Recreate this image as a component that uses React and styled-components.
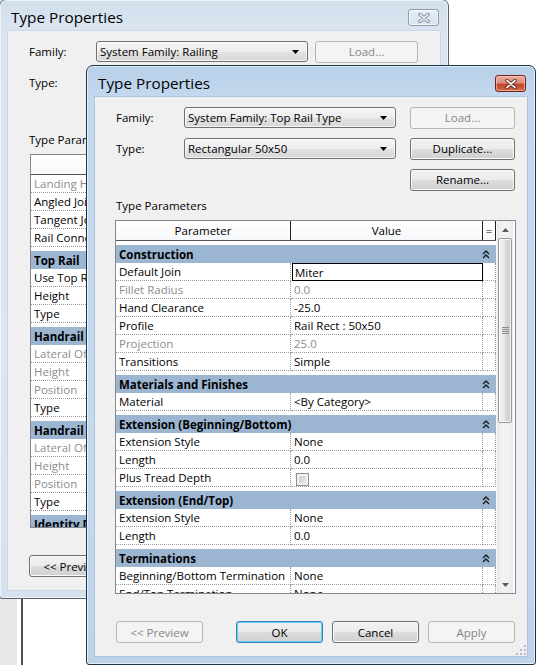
import React from 'react';
import styled, { createGlobalStyle, css } from 'styled-components';

const FONT = `"Open Sans", "Noto Sans", "DejaVu Sans", sans-serif`;

const Global = createGlobalStyle`
  html, body { margin: 0; padding: 0; background: #fff; }
  body { font-family: ${FONT}; font-size: 11.5px; color: #000; }
  *, *::before, *::after { box-sizing: border-box; }
`;

const Desktop = styled.div`
  position: relative;
  width: 536px;
  height: 665px;
  overflow: hidden;
  background: #fff;
  display: flex;
  gap: 4px;
`;
const DesktopStrip = styled.div`
  width: 17px;
  background: #e8e8e8;
`;
const DesktopRule = styled.div`
  width: 2px;
  background: #505050;
`;

const Window = styled.section`
  position: absolute;
  left: ${p => p.$x}px;
  top: ${p => p.$y}px;
  width: 450px;
  height: 600px;
  display: flex;
  flex-direction: column;
  padding: 0 7px 7px;
  border: 1px solid ${p => (p.$active ? '#1f3446' : '#55626f')};
  border-radius: 7px 7px 3px 3px;
  background: ${p =>
    p.$active
      ? 'linear-gradient(180deg, #b7cfe8 0px, #c3d8ee 28px, #c6daef 60%, #bdd3ea 100%)'
      : 'linear-gradient(180deg, #d2dfec 0px, #d9e4f0 28px, #dbe6f2 60%, #d6e2ee 100%)'};
  box-shadow: inset 0 0 0 1px rgba(255, 255, 255, 0.6);
`;

const TitleBar = styled.header`
  height: 30px;
  flex: none;
  display: flex;
  align-items: flex-start;
  padding: 9px 2px 0 4px;
`;
const Title = styled.h1`
  flex: 1;
  margin: 0;
  font: 400 15.3px/17px ${FONT};
  color: #000;
`;
const CloseButton = styled.button`
  width: 31px;
  height: 17px;
  padding: 0;
  display: flex;
  align-items: center;
  justify-content: center;
  border-radius: 3px;
  ${p =>
    p.$active
      ? css`
          border: 1px solid #6e2418;
          background: linear-gradient(180deg, #e9aa9c 0%, #dc8f7e 45%, #c4452c 55%, #d26a45 100%);
          box-shadow: inset 0 0 0 1px rgba(255, 220, 210, 0.55);
        `
      : css`
          border: 1px solid #8c9caf;
          background: linear-gradient(180deg, #e6edf5 0%, #d9e3ee 100%);
          box-shadow: inset 0 0 0 1px rgba(255, 255, 255, 0.6);
        `}
`;

const CloseGlyph = ({ active }) => (
  <svg width="12" height="10" viewBox="0 0 12 10">
    <path d="M2 1.5 L10 8.5 M10 1.5 L2 8.5" stroke={active ? '#5b1b10' : '#6f8194'} strokeWidth="3.4" strokeLinecap="round" fill="none" />
    <path d="M2 1.5 L10 8.5 M10 1.5 L2 8.5" stroke={active ? '#ffffff' : '#e9eef4'} strokeWidth="1.7" strokeLinecap="round" fill="none" />
  </svg>
);

const Client = styled.div`
  position: relative;
  flex: 1;
  display: flex;
  flex-direction: column;
  background: #f0f0f0;
  border: 1px solid ${p => (p.$active ? '#aec4db' : '#cbd7e4')};
  padding: 0 11px 0 20px;
`;

const FormGrid = styled.div`
  display: grid;
  grid-template-columns: ${p => p.$labelW}px 212px ${p => p.$btnW}px;
  grid-template-rows: repeat(3, 21px);
  column-gap: ${p => p.$gap}px;
  row-gap: 10px;
  margin-top: 10px;
  align-items: center;
`;

const Label = styled.span`
  padding-left: 1px;
  white-space: nowrap;
`;

const Combo = styled.div`
  height: 21px;
  display: flex;
  align-items: center;
  padding: 0 8px 0 3px;
  border: 1px solid #707070;
  border-radius: 3px;
  background: linear-gradient(180deg, #f4f4f4 0%, #ededed 50%, #e2e2e2 51%, #d8d8d8 100%);
  box-shadow: inset 0 0 0 1px rgba(255, 255, 255, 0.7);
  white-space: nowrap;
`;
const ComboText = styled.span`
  flex: 1;
`;
const ComboArrow = () => (
  <svg width="7" height="4" viewBox="0 0 7 4">
    <path d="M0 0 H7 L3.5 4 Z" fill="#000" />
  </svg>
);

const Button = styled.button`
  height: 22px;
  width: ${p => p.$w || 87}px;
  padding: 0;
  font: 11.5px ${FONT};
  color: #000;
  border-radius: 3px;
  border: 1px solid #707070;
  background: linear-gradient(180deg, #f2f2f2 0%, #ebebeb 50%, #dddddd 51%, #cfcfcf 100%);
  box-shadow: inset 0 0 0 1px #fbfbfb;
  grid-column: ${p => p.$col || 'auto'};
  ${p =>
    p.disabled &&
    css`
      border-color: #b2b6b9;
      background: #f4f4f4;
      color: #868686;
      box-shadow: none;
    `}
  ${p =>
    p.$default &&
    css`
      border-color: #3c7fb1;
      background: linear-gradient(180deg, #f0f0f0 0%, #e9e9e9 50%, #dcdcdc 51%, #d0d0d0 100%);
      box-shadow: inset 0 0 0 1px #5fd0f5;
    `}
`;

const Caption = styled.div`
  margin-top: 8px;
  line-height: 16px;
  padding-left: 1px;
`;

const PropGrid = styled.div`
  margin-top: 6px;
  margin-left: ${p => p.$inset || 0}px;
  height: 374px;
  flex: none;
  display: flex;
  border: 1px solid #828790;
  background: #fff;
`;
const GridBody = styled.div`
  width: 380px;
  flex: none;
  overflow: hidden;
  display: flex;
  flex-direction: column;
`;
const HeaderRow = styled.div`
  display: grid;
  grid-template-columns: 175px 192px 13px;
  height: 20px;
  flex: none;
  border-bottom: 1px solid #555;
  background: linear-gradient(180deg, #ffffff 0%, #f6f7f9 100%);
`;
const HeaderCell = styled.div`
  display: flex;
  align-items: center;
  justify-content: center;
  border-right: 1px solid #222;
  white-space: nowrap;
`;
const Row = styled.div`
  display: grid;
  grid-template-columns: 175px 192px 13px;
  height: 18px;
  flex: none;
`;
const Cell = styled.div`
  display: flex;
  align-items: center;
  padding: 0 3px;
  border-right: 1px dotted #9a9a9a;
  border-bottom: 1px dotted #9a9a9a;
  white-space: nowrap;
  overflow: hidden;
  color: ${p => (p.$muted ? '#8d8d8d' : '#000')};
  ${p =>
    p.$editing &&
    css`
      border: 1px solid #000;
      padding: 0 2px;
      margin-left: 1px;
    `}
`;
const GroupBand = styled.div`
  margin-top: 4px;
  height: 18px;
  flex: none;
  display: flex;
  align-items: center;
  padding: 0 6px 0 3px;
  background: #9cb6d2;
  font-weight: 700;
  white-space: nowrap;
`;
const GroupTitle = styled.span`
  flex: 1;
`;
const CollapseGlyph = () => (
  <svg width="8" height="9" viewBox="0 0 8 9">
    <path d="M1 4 L4 1 L7 4 M1 8 L4 5 L7 8" stroke="#1a1a1a" strokeWidth="1.4" fill="none" />
  </svg>
);

const CheckBox = styled.span`
  display: block;
  width: 13px;
  height: 13px;
  margin: 3px 0 0 2px;
  border: 1px solid #8e8f8f;
  background: linear-gradient(135deg, #c9c9c9 0%, #eeeeee 100%);
  box-shadow: inset 0 0 0 2px #f3f3f3;
`;

const ScrollBar = styled.div`
  width: 17px;
  flex: none;
  display: flex;
  flex-direction: column;
  padding: 0 1px;
  background: linear-gradient(90deg, #e6e6e6 0%, #f2f2f2 30%, #f2f2f2 70%, #e9e9e9 100%);
  border-left: 1px solid #f8f8f8;
`;
const ScrollArrow = styled.div`
  height: 17px;
  flex: none;
  display: flex;
  align-items: center;
  justify-content: center;
`;
const ScrollTrack = styled.div`
  flex: 1;
`;
const ScrollThumb = styled.div`
  height: 185px;
  display: flex;
  align-items: center;
  justify-content: center;
  border: 1px solid #9a9a9a;
  border-radius: 2px;
  background: linear-gradient(90deg, #f3f3f3 0%, #e8e8e8 50%, #d9d9d9 51%, #cfcfcf 100%);
  box-shadow: inset 0 0 0 1px rgba(255, 255, 255, 0.7);
`;
const Arrow = ({ up }) => (
  <svg width="7" height="4" viewBox="0 0 7 4">
    <path d={up ? 'M0 4 L3.5 0 L7 4 Z' : 'M0 0 H7 L3.5 4 Z'} fill="#5b5b5b" />
  </svg>
);
const Grip = () => (
  <svg width="7" height="7" viewBox="0 0 7 7">
    <path d="M0 0.5 H7 M0 2.5 H7 M0 4.5 H7 M0 6.5 H7" stroke="#8a8a8a" strokeWidth="1" />
  </svg>
);

const Footer = styled.div`
  margin-top: 27px;
  display: flex;
  gap: 9px;
  padding: 0 1px;
`;
const FooterSpacer = styled.div`
  width: 15px;
`;

const SizeGrip = styled.div`
  position: absolute;
  right: 1px;
  bottom: 1px;
  width: 11px;
  height: 11px;
  display: flex;
`;
const SizeGripGlyph = () => (
  <svg width="11" height="11" viewBox="0 0 11 11">
    {[
      [9, 1], [9, 5], [5, 5], [9, 9], [5, 9], [1, 9],
    ].map(([x, y]) => (
      <rect key={`${x}-${y}`} x={x} y={y} width="2" height="2" fill="#b8bcc2" />
    ))}
  </svg>
);

const frontGroups = [
  {
    title: 'Construction',
    rows: [
      { name: 'Default Join', value: 'Miter', editing: true },
      { name: 'Fillet Radius', value: '0.0', muted: true },
      { name: 'Hand Clearance', value: '-25.0' },
      { name: 'Profile', value: 'Rail Rect : 50x50' },
      { name: 'Projection', value: '25.0', muted: true },
      { name: 'Transitions', value: 'Simple' },
    ],
  },
  { title: 'Materials and Finishes', rows: [{ name: 'Material', value: '<By Category>' }] },
  {
    title: 'Extension (Beginning/Bottom)',
    rows: [
      { name: 'Extension Style', value: 'None' },
      { name: 'Length', value: '0.0' },
      { name: 'Plus Tread Depth', check: true },
    ],
  },
  {
    title: 'Extension (End/Top)',
    rows: [
      { name: 'Extension Style', value: 'None' },
      { name: 'Length', value: '0.0' },
    ],
  },
  {
    title: 'Terminations',
    rows: [
      { name: 'Beginning/Bottom Termination', value: 'None' },
      { name: 'End/Top Termination', value: 'None' },
    ],
  },
];

const backLead = [
  { name: 'Landing Height Adjustment', value: 'No', muted: true },
  { name: 'Angled Joins', value: 'Add Vertical/Horizontal Segments' },
  { name: 'Tangent Joins', value: 'Extend Rails to Meet' },
  { name: 'Rail Connections', value: 'Trim' },
];
const handrailRows = [
  { name: 'Lateral Offset', value: '', muted: true },
  { name: 'Height', value: '', muted: true },
  { name: 'Position', value: '', muted: true },
  { name: 'Type', value: 'None' },
];
const backGroups = [
  {
    title: 'Top Rail',
    rows: [
      { name: 'Use Top Rail', check: true },
      { name: 'Height', value: '1100.0' },
      { name: 'Type', value: 'Rectangular 50x50' },
    ],
  },
  { title: 'Handrail 1', rows: handrailRows },
  { title: 'Handrail 2', rows: handrailRows },
  { title: 'Identity Data', rows: [{ name: 'Type Image', value: '' }] },
];

const DataRow = ({ row }) => (
  <Row>
    <Cell $muted={row.muted}>{row.name}</Cell>
    <Cell $muted={row.muted} $editing={row.editing}>
      {row.check ? <CheckBox /> : row.value}
    </Cell>
    <Cell />
  </Row>
);

const ParameterTable = ({ lead = [], groups, inset }) => (
  <PropGrid $inset={inset}>
    <GridBody>
      <HeaderRow>
        <HeaderCell>Parameter</HeaderCell>
        <HeaderCell>Value</HeaderCell>
        <HeaderCell>=</HeaderCell>
      </HeaderRow>
      {lead.map((r, i) => (
        <DataRow key={`lead-${i}`} row={r} />
      ))}
      {groups.map((g, gi) => (
        <React.Fragment key={g.title + gi}>
          <GroupBand>
            <GroupTitle>{g.title}</GroupTitle>
            <CollapseGlyph />
          </GroupBand>
          {g.rows.map((r, i) => (
            <DataRow key={`${gi}-${i}`} row={r} />
          ))}
        </React.Fragment>
      ))}
    </GridBody>
    <ScrollBar>
      <ScrollArrow>
        <Arrow up />
      </ScrollArrow>
      <ScrollTrack>
        <ScrollThumb>
          <Grip />
        </ScrollThumb>
      </ScrollTrack>
      <ScrollArrow>
        <Arrow />
      </ScrollArrow>
    </ScrollBar>
  </PropGrid>
);

const TypeDialog = ({ x, y, active, family, type, labelW, gap, btnW, lead, groups, inset, previewEnabled }) => (
  <Window $x={x} $y={y} $active={active}>
    <TitleBar>
      <Title>Type Properties</Title>
      <CloseButton $active={active} aria-label="Close">
        <CloseGlyph active={active} />
      </CloseButton>
    </TitleBar>
    <Client $active={active}>
      <FormGrid $labelW={labelW} $gap={gap} $btnW={btnW}>
        <Label>Family:</Label>
        <Combo>
          <ComboText>{family}</ComboText>
          <ComboArrow />
        </Combo>
        <Button $w={btnW} disabled>Load...</Button>
        <Label>Type:</Label>
        <Combo>
          <ComboText>{type}</ComboText>
          <ComboArrow />
        </Combo>
        <Button $w={btnW}>Duplicate...</Button>
        <Button $w={btnW} $col="3">Rename...</Button>
      </FormGrid>
      <Caption>Type Parameters</Caption>
      <ParameterTable lead={lead} groups={groups} inset={inset} />
      <Footer>
        <Button disabled={!previewEnabled}>&lt;&lt; Preview</Button>
        <FooterSpacer />
        <Button $default={active}>OK</Button>
        <Button>Cancel</Button>
        <Button disabled>Apply</Button>
      </Footer>
      {active && (
        <SizeGrip>
          <SizeGripGlyph />
        </SizeGrip>
      )}
    </Client>
  </Window>
);

export default function App() {
  return (
    <>
      <Global />
      <Desktop>
        <DesktopStrip />
        <DesktopRule />
        <TypeDialog
          x={-1}
          y={-1}
          active={false}
          family="System Family: Railing"
          type="Handrail - Rectangular"
          labelW={61}
          gap={7}
          btnW={103}
          lead={backLead}
          groups={backGroups}
          inset={2}
          previewEnabled
        />
        <TypeDialog
          x={86}
          y={65}
          active
          family="System Family: Top Rail Type"
          type="Rectangular 50x50"
          labelW={55}
          gap={14}
          btnW={105}
          groups={frontGroups}
        />
      </Desktop>
    </>
  );
}
